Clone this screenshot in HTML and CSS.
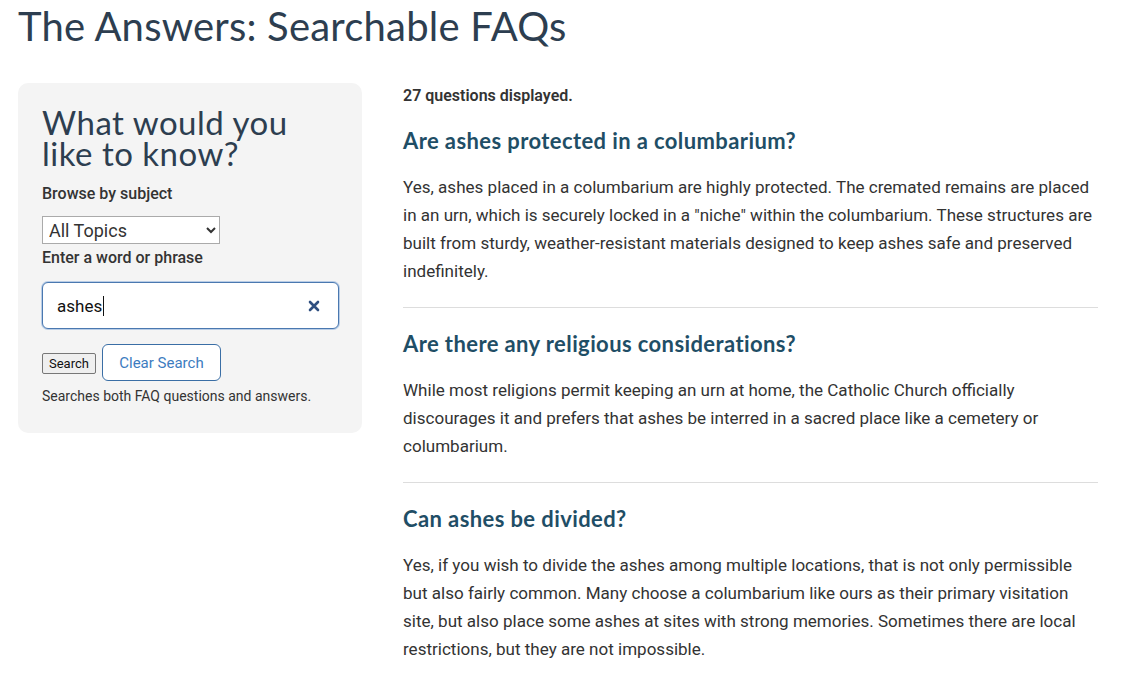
FILE: index.html
```html
<!DOCTYPE html>
<html lang="en">
<head>
<meta charset="utf-8">
<title>The Answers: Searchable FAQs</title>
<link rel="stylesheet" href="styles.css">
</head>
<body>
<h1 class="page-title">The Answers: Searchable FAQs</h1>
<div class="layout">
  <aside class="sidebar">
    <h2 class="side-title">What would you like to know?</h2>
    <label class="field-label" for="topic">Browse by subject</label>
    <select id="topic" class="topic-select">
      <option>All Topics</option>
    </select>
    <label class="field-label label-2" for="q">Enter a word or phrase</label>
    <div class="search-box">
      <span class="search-text">ashes<span class="caret"></span></span>
      <svg class="clear-x" width="12" height="12" viewBox="0 0 12 12"><path d="M2 2 L10 10 M10 2 L2 10" stroke="#2f4f80" stroke-width="2.6" stroke-linecap="round"/></svg>
    </div>
    <div class="buttons">
      <button class="btn-search">Search</button>
      <button class="btn-clear">Clear Search</button>
    </div>
    <p class="hint">Searches both FAQ questions and answers.</p>
  </aside>
  <main class="results">
    <p class="count">27 questions displayed.</p>
    <article class="faq">
      <h3 class="q">Are ashes protected in a columbarium?</h3>
      <p class="a">Yes, ashes placed in a columbarium are highly protected. The cremated remains are placed in an urn, which is securely locked in a "niche" within the columbarium. These structures are built from sturdy, weather-resistant materials designed to keep ashes safe and preserved indefinitely.</p>
    </article>
    <article class="faq">
      <h3 class="q">Are there any religious considerations?</h3>
      <p class="a">While most religions permit keeping an urn at home, the Catholic Church officially discourages it and prefers that ashes be interred in a sacred place like a cemetery or columbarium.</p>
    </article>
    <article class="faq">
      <h3 class="q">Can ashes be divided?</h3>
      <p class="a">Yes, if you wish to divide the ashes among multiple locations, that is not only permissible but also fairly common. Many choose a columbarium like ours as their primary visitation site, but also place some ashes at sites with strong memories. Sometimes there are local restrictions, but they are not impossible.</p>
    </article>
  </main>
</div>
</body>
</html>
```
FILE: styles.css
```css
html, body {
  margin: 0;
  padding: 0;
  background: #fff;
}
body {
  font-family: Roboto, "Liberation Sans", sans-serif;
  color: #333;
  padding: 0 18px;
  overflow: hidden;
  height: 678px;
}
.page-title {
  font-family: Lato, "Open Sans", sans-serif;
  font-weight: 400;
  font-size: 40px;
  letter-spacing: 0.2px;
  color: #2d3e50;
  margin: 0;
  padding-top: 4px;
  line-height: 44px;
  height: 45px;
}
.layout {
  display: flex;
  align-items: flex-start;
  margin-top: 34px;
  gap: 41px;
}
.sidebar {
  width: 344px;
  box-sizing: border-box;
  background: #f4f4f4;
  border-radius: 10px;
  padding: 24px 24px 28px;
  display: flex;
  flex-direction: column;
  align-items: flex-start;
}
.side-title {
  font-family: Lato, "Open Sans", sans-serif;
  font-weight: 400;
  font-size: 33px;
  letter-spacing: 0.5px;
  line-height: 31px;
  color: #2d3e50;
  margin: 0 0 14px;
  max-width: 260px;
}
.field-label {
  font-size: 16px;
  font-weight: 500;
  color: #333;
  line-height: 22px;
}
.topic-select {
  margin-top: 11px;
  width: 178px;
  height: 28px;
  font-family: Roboto, sans-serif;
  font-size: 18px;
  color: #333;
  border: 1px solid #aaa;
  background: #fff;
  padding: 0 2px;
}
.label-2 {
  margin-top: 3px;
}
.search-box {
  margin-top: 13px;
  width: 297px;
  height: 47px;
  box-sizing: border-box;
  background: #fff;
  border: 1px solid #4a78b0;
  border-radius: 6px;
  box-shadow: 0 0 0 1px #b9cde6;
  display: flex;
  align-items: center;
  justify-content: space-between;
  padding: 0 18px 0 14px;
}
.search-text {
  font-size: 17px;
  color: #111;
  display: flex;
  align-items: center;
}
.caret {
  display: inline-block;
  width: 1px;
  height: 20px;
  background: #111;
  margin-left: 1px;
}
.buttons {
  display: flex;
  align-items: center;
  gap: 6px;
  margin-top: 15px;
}
.btn-search {
  font-family: Roboto, sans-serif;
  font-size: 13px;
  height: 21px;
  padding: 0 6px;
  border: 1px solid #777;
  border-radius: 2px;
  background: #efefef;
  color: #111;
  margin-top: 2px;
}
.btn-clear {
  font-family: Roboto, sans-serif;
  font-size: 15px;
  height: 37px;
  width: 119px;
  border: 1px solid #3a6ea5;
  border-radius: 6px;
  background: #fff;
  color: #3d7cc0;
}
.hint {
  margin: 6px 0 0;
  font-size: 14px;
  color: #333;
  line-height: 18px;
}
.results {
  flex: 1;
  max-width: 695px;
}
.count {
  margin: 3px 0 0;
  font-size: 16px;
  font-weight: 600;
  color: #333;
  line-height: 20px;
}
.faq + .faq {
  border-top: 1px solid #ddd;
}
.q {
  font-family: Lato, "Open Sans", sans-serif;
  font-weight: 700;
  font-size: 22px;
  letter-spacing: 0.4px;
  color: #1f4e66;
  margin: 21px 0 0;
  line-height: 28px;
}
.faq + .faq .q {
  margin-top: 22px;
}
.a {
  margin: 18px 0 0;
  font-size: 17.05px;
  line-height: 28px;
  color: #333;
  padding-bottom: 22px;
}
.faq:first-child .a {
  margin-top: 21px;
}
```
